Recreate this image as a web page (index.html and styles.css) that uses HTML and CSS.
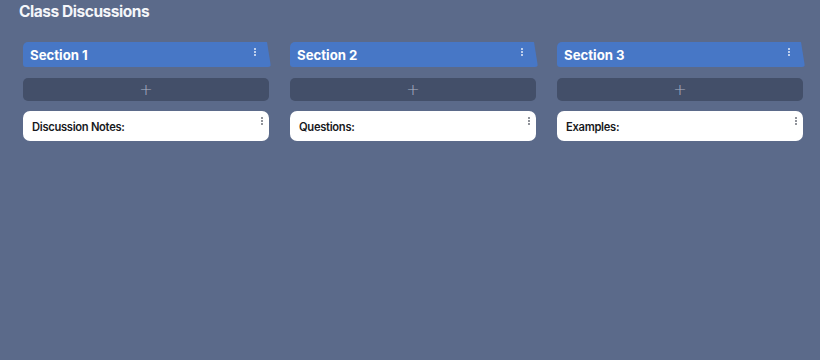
FILE: index.html
```html
<!DOCTYPE html>
<html lang="en">
<head>
<meta charset="utf-8">
<title>Class Discussions</title>
<link rel="stylesheet" href="styles.css">
</head>
<body>
<div class="page">
  <h1 class="title">Class Discussions</h1>
  <div class="board">
    <section class="column">
      <div class="col-header">
        <span class="col-name">Section 1</span>
        <span class="dots"><i></i><i></i><i></i></span>
      </div>
      <button class="add-btn" type="button">+</button>
      <div class="card">
        <span class="card-text">Discussion Notes:</span>
        <span class="dots dark"><i></i><i></i><i></i></span>
      </div>
    </section>
    <section class="column">
      <div class="col-header">
        <span class="col-name">Section 2</span>
        <span class="dots"><i></i><i></i><i></i></span>
      </div>
      <button class="add-btn" type="button">+</button>
      <div class="card">
        <span class="card-text">Questions:</span>
        <span class="dots dark"><i></i><i></i><i></i></span>
      </div>
    </section>
    <section class="column">
      <div class="col-header">
        <span class="col-name">Section 3</span>
        <span class="dots"><i></i><i></i><i></i></span>
      </div>
      <button class="add-btn" type="button">+</button>
      <div class="card">
        <span class="card-text">Examples:</span>
        <span class="dots dark"><i></i><i></i><i></i></span>
      </div>
    </section>
  </div>
</div>
</body>
</html>
```

FILE: styles.css
```css
html, body {
  margin: 0;
  padding: 0;
  background: #5b6a8a;
  font-family: Inter, "Noto Sans", "Liberation Sans", sans-serif;
}

.page {
  padding: 1px 17px 0 19px;
}

.title {
  margin: 0;
  font-size: 15.5px;
  font-weight: 700;
  line-height: 21px;
  color: #f4f6fa;
  letter-spacing: -0.45px;
}

.board {
  display: grid;
  grid-template-columns: repeat(3, 246px);
  column-gap: 21px;
  margin-top: 20px;
  padding-left: 4px;
}

.column {
  display: flex;
  flex-direction: column;
}

.col-header {
  position: relative;
  height: 25px;
  display: flex;
  align-items: center;
  justify-content: space-between;
  padding: 0 13px 0 7px;
  color: #ffffff;
  z-index: 0;
}

.col-header::before {
  content: "";
  position: absolute;
  inset: 0 -2px 0 0;
  background: #4777c6;
  border-radius: 5px 5px 3px 3px;
  clip-path: polygon(0 0, calc(100% - 4px) 0, 100% 100%, 0 100%);
  z-index: -1;
}

.col-name {
  font-size: 13.2px;
  font-weight: 700;
  margin-top: 1px;
}

.dots {
  display: flex;
  flex-direction: column;
  gap: 1px;
  align-self: flex-start;
  margin-top: 6px;
}

.dots i {
  display: block;
  width: 2px;
  height: 2px;
  border-radius: 50%;
  background: #e6ecf8;
}

.dots.dark i {
  background: #6b6f78;
}

.add-btn {
  margin-top: 11px;
  height: 23px;
  border: none;
  border-radius: 5px;
  background: #434f69;
  color: #aab2c3;
  font-family: "DejaVu Sans", sans-serif;
  font-size: 16px;
  font-weight: 200;
  line-height: 23px;
  padding: 0;
}

.card {
  margin-top: 10px;
  height: 30px;
  background: #ffffff;
  border-radius: 7px;
  display: flex;
  justify-content: space-between;
  align-items: center;
  padding: 0 6px 0 9px;
}

.card .dots {
  margin-top: 6px;
}

.card-text {
  font-size: 11.2px;
  font-weight: 600;
  color: #17191d;
  margin-top: 1px;
  letter-spacing: -0.3px;
}
```
